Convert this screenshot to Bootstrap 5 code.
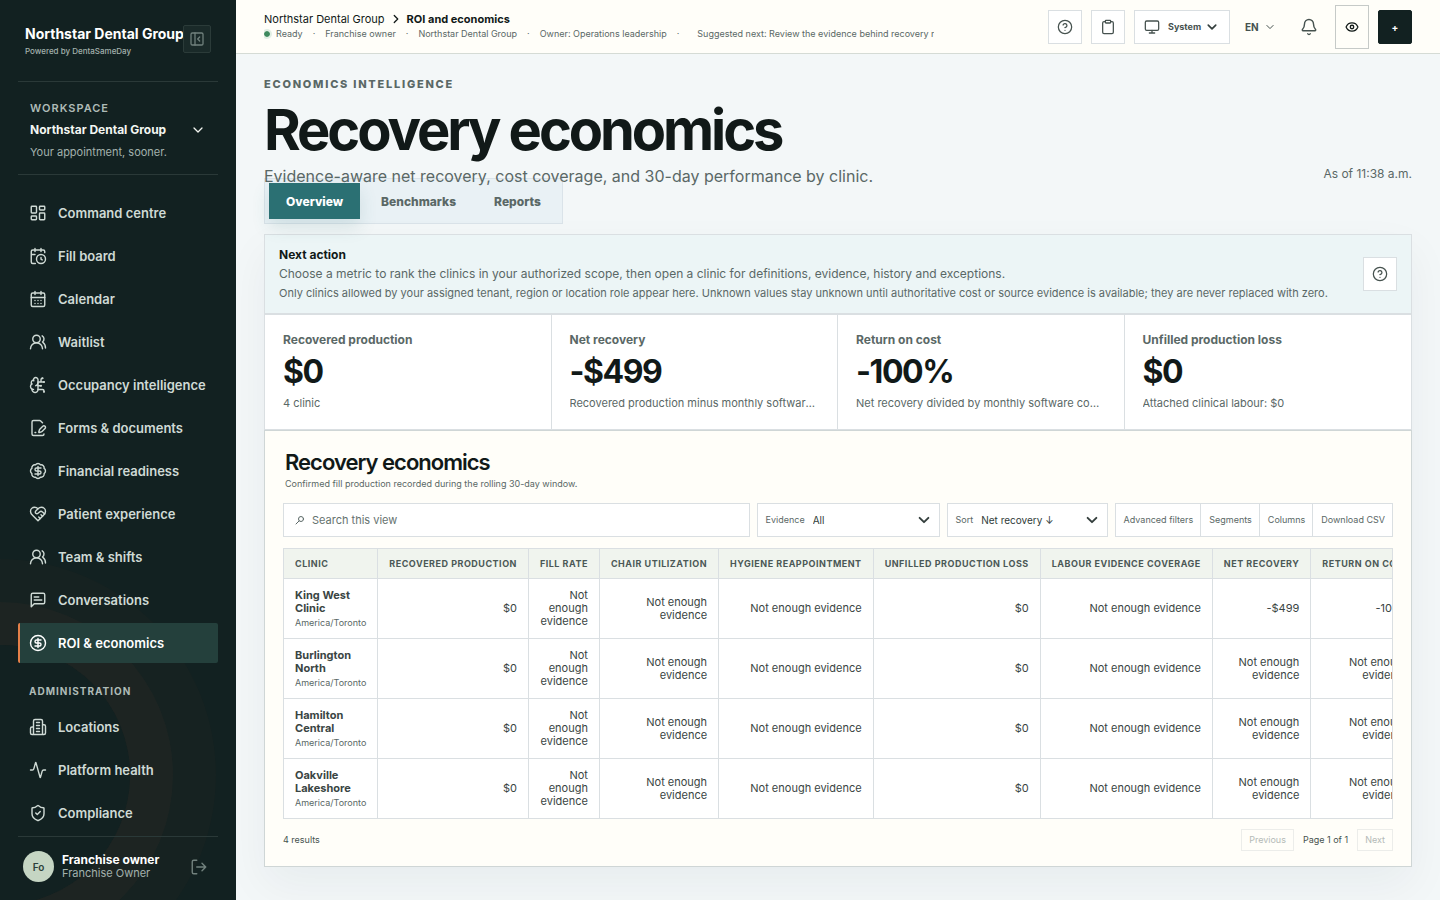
<!DOCTYPE html>
<html lang="en">
<head>
<meta charset="utf-8">
<meta name="viewport" content="width=device-width, initial-scale=1">
<title>ROI and economics</title>
<link href="https://cdn.jsdelivr.net/npm/bootstrap@5.3.0/dist/css/bootstrap.min.css" rel="stylesheet">
<style>
:root { --ink:#111918; --muted:#5a6866; --line:#dadfe2; --side:#122121; --cream:#fffef9; }
body { font-family: Inter, "Liberation Sans", sans-serif; font-size: 11px; line-height: 16px; color: var(--ink); background: #f3f7f8; }
.ico { width: 18px; height: 18px; flex: none; fill: none; stroke: currentColor; stroke-width: 1.9; stroke-linecap: round; stroke-linejoin: round; }
.ico-sm { width: 16px; height: 16px; }
.ico-xs { width: 14px; height: 14px; stroke-width: 2.2; }
.ico-thin { stroke-width: 1; }
h1, h2, p { margin: 0; }
button, select, input { font-family: inherit; }

/* Sidebar */
.side { width: 236px; height: 100vh; top: 0; z-index: 2; background: var(--side); color: #cfdad5; overflow: hidden; padding: 0 18px; }
.side::before { content: ""; position: absolute; left: -130px; bottom: -5px; width: 260px; height: 260px; border-radius: 50%; box-shadow: 0 0 0 43px rgba(232,116,76,.035), 0 0 0 86px rgba(232,116,76,.02); }
.side > * { position: relative; }
.side-rule { border-color: #2a3938 !important; }
.brand { height: 82px; padding: 26px 7px 0; }
.brand-name { font-size: 14px; font-weight: 700; color: #fff; white-space: nowrap; }
.brand-sub { font-size: 8px; line-height: 12px; margin-top: 3px; color: #a3b1ad; font-weight: 500; }
.collapse-btn { position: absolute; right: 7px; top: 25px; width: 28px; height: 28px; border: 1px solid #2b3b39; border-radius: 2px; background: #1a2a29; color: #71817d; }
.workspace { height: 93px; padding: 18px 12px 0; background: none; border: 0; color: inherit; }
.ws-label { font-size: 11px; font-weight: 600; letter-spacing: 1px; color: #aebbb7; }
.ws-name { font-size: 12px; font-weight: 700; color: #f3f6f1; margin-top: 6px; }
.ws-note { font-size: 11px; color: #a3b1ad; margin-top: 6px; }
.menu-area { min-height: 0; padding-top: 18px; }
.menu { display: grid; gap: 3px; }
.menu a { height: 40px; padding: 0 10px 0 9px; border-left: 2px solid transparent; border-radius: 2px; gap: 11px; display: flex; align-items: center; font-size: 13px; font-weight: 600; color: #cfdad5; text-decoration: none; white-space: nowrap; }
.menu a.active { background: #24403c; border-left-color: #e58049; color: #fff; }
.admin-label { font-size: 10px; font-weight: 700; letter-spacing: 1px; color: #aebbb7; padding: 20px 11px 8px; }
.avatar { width: 31px; height: 31px; border-radius: 50%; background: #c5d5c3; color: #2c3f3a; font-size: 10px; font-weight: 600; }
.profile { height: 64px; padding: 0 10px 4px 5px; }
.profile strong { display: block; font-size: 12px; line-height: 14px; color: #fff; }
.profile span { display: block; font-size: 11px; line-height: 13px; color: #a3b1ad; }
.profile a { color: #71817d; }

/* Top bar */
.topbar { height: 54px; background: var(--cream); border-bottom: 1px solid #d5dbd5; padding: 0 28px; }
.crumbs { width: 670px; min-width: 0; }
.crumbs-path { font-size: 11px; line-height: 14px; }
.crumbs-path a { color: var(--ink); text-decoration: none; }
.crumbs-meta { font-size: 9px; line-height: 15px; color: var(--muted); white-space: nowrap; overflow: hidden; }
.sep { padding: 0 10px; }
.dot { width: 6px; height: 6px; border-radius: 50%; background: #3f8a5f; outline: 2px solid #e2efe4; margin-right: 6px; flex: none; }
.tools { gap: 9px; }
.sq { width: 34px; height: 34px; padding: 0; border: 1px solid var(--line); border-radius: 0; background: #fff; color: #46524f; }
.sq.eye { height: 44px; border-color: #c6cac8; color: var(--ink); background: var(--cream); }
.sq.plus { background: var(--side); border-color: var(--side); color: #fff; border-radius: 2px; font-size: 10px; line-height: 16px; font-weight: 700; }
.sq.bare { background: none; border-color: transparent; }
.pick { appearance: none; border: 0; background: transparent right center / 14px 14px no-repeat; color: #46524f; outline-offset: 2px; background-image: url("data:image/svg+xml,%3Csvg xmlns='http://www.w3.org/2000/svg' viewBox='0 0 16 16'%3E%3Cpath fill='none' stroke='%23343f3d' stroke-width='2.2' stroke-linecap='round' stroke-linejoin='round' d='m3 5.5 5 5 5-5'/%3E%3C/svg%3E"); }
.theme { width: 96px; height: 34px; border: 1px solid var(--line); background: #fff; padding: 0 11px 0 9px; color: #46524f; }
.theme .pick { font-size: 9px; font-weight: 700; width: 50px; padding: 0; background-size: 12px 12px; }
.lang { width: 44px; padding: 0 6px; }
.lang .pick { font-size: 10px; font-weight: 700; width: 30px; padding: 0; background-size: 10px 10px; background-image: url("data:image/svg+xml,%3Csvg xmlns='http://www.w3.org/2000/svg' viewBox='0 0 16 16'%3E%3Cpath fill='none' stroke='%2346524f' stroke-width='1.6' stroke-linecap='round' stroke-linejoin='round' d='m3 5.5 5 5 5-5'/%3E%3C/svg%3E"); }

/* Page head */
.page { padding: 22px 28px 33px; }
.eyebrow { font-size: 11px; font-weight: 800; letter-spacing: 0.16em; color: var(--muted); }
.page h1 { font-size: 56px; line-height: 56px; font-weight: 700; letter-spacing: -0.055em; margin-top: 10px; }
.sub-title { font-size: 16px; line-height: 24px; margin-top: 6px; color: var(--muted); }
.as-of { font-size: 12px; color: var(--muted); margin-bottom: 6px; }
.tabs { margin-top: -10px; width: max-content; max-width: 100%; padding: 4px; gap: 4px; border: 1px solid rgba(195,208,216,.4); background: rgba(224,237,242,.55); }
.tabs button { height: 36px; padding: 1px 17px 0; border: 0; background: none; font-size: 12px; font-weight: 800; color: var(--muted); }
.tabs button.active { background: #2b7073; color: #fff; box-shadow: 0 8px 18px rgba(43,112,115,.14); }

/* Stacked blocks */
.stack { box-shadow: 0 18px 42px rgba(24,48,58,.05); margin-top: 10px; }
.next { background: #ecf5f6; border: 1px solid var(--line); padding: 11px 14px; color: var(--muted); }
.next strong { display: block; font-size: 12px; line-height: 18px; color: var(--ink); }
.next-lead { font-size: 12px; line-height: 20px; }
.next-note { font-size: 11px; line-height: 18px; }
.kpis { background: #fff; border: 1px solid var(--line); }
.kpi { padding: 17px 22px 18px 18px; color: var(--muted); border-right: 1px solid var(--line); }
.kpi:last-child { border-right: 0; }
.kpi-label { font-size: 12px; font-weight: 700; }
.kpi-value { font-size: 32px; line-height: 36px; font-weight: 700; letter-spacing: -0.045em; color: var(--ink); margin: 6px 0 5px; }
.panel { background: var(--cream); border: 1px solid #cfd6d6; padding: 17px 18px 15px; }
.panel h2 { font-size: 22px; line-height: 28px; font-weight: 600; letter-spacing: -0.045em; padding-left: 2px; }
.panel-sub { font-size: 9px; line-height: 14px; margin-top: 1px; color: var(--muted); padding-left: 2px; }
.toolbar { gap: 7px; margin: 12px 0 11px; }
.box { height: 34px; background: #fff; border: 1px solid var(--line); color: var(--muted); }
.search input { border: 0; background: none; outline: 0; font-size: 11px; padding: 0; min-width: 0; }
.search input::placeholder { color: #66726f; opacity: 1; }
.field label { font-size: 9px; }
.field .pick { font-size: 10px; color: #303b39; min-width: 0; padding: 0; }
.evidence { width: 183px; } .sort { width: 161px; }
.actions button { font-size: 9px; border: 0; background: none; color: var(--muted); padding: 0 7px 0 8px; }
.actions button + button { border-left: 1px solid var(--line); }
.grid-wrap { overflow: hidden; border: 1px solid var(--line); background: #fff; }
.grid { width: 100%; margin: 0; border-collapse: separate; border-spacing: 0; }
.grid th, .grid td { border-right: 1px solid var(--line); border-bottom: 1px solid var(--line); padding: 0 11px; text-align: right; color: #3a4543; }
.grid tr > :last-child { border-right: 0; }
.grid thead th { height: 30px; background: #f0f4ee; font-size: 9px; font-weight: 700; letter-spacing: 0.056em; white-space: nowrap; color: #4b5856; text-transform: uppercase; }
.grid tbody td, .grid tbody th { height: 60px; font-size: 11px; line-height: 13px; }
.grid tbody th { padding-top: 2px; }
.grid tbody tr:last-child > * { border-bottom: 0; height: 59px; }
.grid tr > :first-child { text-align: left; }
.grid tbody th span { display: block; font-size: 9px; line-height: 15px; font-weight: 400; color: var(--muted); }
.foot { font-size: 9px; color: #46524f; margin-top: 10px; gap: 9px; }
.foot button { height: 22px; font-size: 9px; border: 1px solid #ecedea; background: none; color: #b4bab7; padding: 0 7px; }
</style>
</head>
<body>
<div class="d-flex align-items-start">
  <aside class="side d-flex flex-column position-sticky flex-shrink-0">
    <div class="brand border-bottom side-rule">
      <div class="brand-name">Northstar Dental Group</div>
      <div class="brand-sub">Powered by DentaSameDay</div>
      <button class="collapse-btn d-flex align-items-center justify-content-center p-0" type="button" aria-label="Collapse sidebar"><svg class="ico ico-sm" viewBox="0 0 24 24"><rect width="18" height="18" x="3" y="3" rx="2"/><path d="M9 3v18M16 15l-3-3 3-3"/></svg></button>
    </div>
    <button class="workspace d-flex flex-column align-items-stretch justify-content-start text-start border-bottom side-rule" type="button">
      <span class="ws-label">WORKSPACE</span>
      <span class="ws-name d-flex justify-content-between align-items-center">Northstar Dental Group <svg class="ico ico-sm" viewBox="0 0 24 24"><path d="m6 9 6 6 6-6"/></svg></span>
      <span class="ws-note">Your appointment, sooner.</span>
    </button>
    <div class="menu-area flex-grow-1 overflow-hidden">
      <nav class="menu" aria-label="Main">
        <a href="#"><svg class="ico" viewBox="0 0 24 24"><rect width="7" height="9" x="3" y="3" rx="1"/><rect width="7" height="5" x="14" y="3" rx="1"/><rect width="7" height="9" x="14" y="12" rx="1"/><rect width="7" height="5" x="3" y="16" rx="1"/></svg>Command centre</a>
        <a href="#"><svg class="ico" viewBox="0 0 24 24"><path d="M16 14v2.2l1.6 1M16 2v4M21 7.5V6a2 2 0 0 0-2-2H5a2 2 0 0 0-2 2v14a2 2 0 0 0 2 2h3.5M3 10h5M8 2v4"/><circle cx="16" cy="16" r="6"/></svg>Fill board</a>
        <a href="#"><svg class="ico" viewBox="0 0 24 24"><path d="M8 2v4M16 2v4M3 10h18M8 14h.01M12 14h.01M16 14h.01M8 18h.01M12 18h.01M16 18h.01"/><rect width="18" height="18" x="3" y="4" rx="2"/></svg>Calendar</a>
        <a href="#"><svg class="ico" viewBox="0 0 24 24"><path d="M18 21a8 8 0 0 0-16 0M22 20c0-3.37-2-6.5-4-8a5 5 0 0 0-.45-8.3"/><circle cx="10" cy="8" r="5"/></svg>Waitlist</a>
        <a href="#"><svg class="ico" viewBox="0 0 24 24"><path d="M12 5a3 3 0 1 0-5.997.125 4 4 0 0 0-2.526 5.77 4 4 0 0 0 .556 6.588A4 4 0 1 0 12 18Z"/><path d="M9 13a4.5 4.5 0 0 0 3-4M6.003 5.125A3 3 0 0 0 6.401 6.5M3.477 10.896a4 4 0 0 1 .585-.396M6 18a4 4 0 0 1-1.967-.516M12 13h4M12 18h6a2 2 0 0 1 2 2v1M12 8h8M16 8V5a2 2 0 0 1 2-2"/><circle cx="16" cy="13" r=".5"/><circle cx="18" cy="3" r=".5"/><circle cx="20" cy="21" r=".5"/><circle cx="20" cy="8" r=".5"/></svg>Occupancy intelligence</a>
        <a href="#"><svg class="ico" viewBox="0 0 24 24"><path d="m18 5-2.414-2.414A2 2 0 0 0 14.172 2H6a2 2 0 0 0-2 2v16a2 2 0 0 0 2 2h12a2 2 0 0 0 2-2"/><path d="M21.378 12.626a1 1 0 0 0-3.004-3.004l-4.01 4.012a2 2 0 0 0-.506.854l-.837 2.87a.5.5 0 0 0 .62.62l2.87-.837a2 2 0 0 0 .854-.506zM8 18h1"/></svg>Forms &amp; documents</a>
        <a href="#"><svg class="ico" viewBox="0 0 24 24"><path d="M3.85 8.62a4 4 0 0 1 4.78-4.77 4 4 0 0 1 6.74 0 4 4 0 0 1 4.78 4.78 4 4 0 0 1 0 6.74 4 4 0 0 1-4.77 4.78 4 4 0 0 1-6.75 0 4 4 0 0 1-4.78-4.77 4 4 0 0 1 0-6.76Z"/><path d="M16 8h-6a2 2 0 1 0 0 4h4a2 2 0 1 1 0 4H8M12 18V6"/></svg>Financial readiness</a>
        <a href="#"><svg class="ico" viewBox="0 0 24 24"><path d="M19 14c1.49-1.46 3-3.21 3-5.5A5.5 5.5 0 0 0 16.5 3c-1.76 0-3 .5-4.5 2-1.5-1.5-2.74-2-4.5-2A5.5 5.5 0 0 0 2 8.5c0 2.3 1.5 4.05 3 5.5l7 7Z"/><path d="M12 5 9.04 7.96a2.17 2.17 0 0 0 0 3.08c.82.82 2.13.85 3 .07l2.07-1.9a2.82 2.82 0 0 1 3.79 0l2.96 2.66M18 15l-2-2M15 18l-2-2"/></svg>Patient experience</a>
        <a href="#"><svg class="ico" viewBox="0 0 24 24"><path d="M18 21a8 8 0 0 0-16 0M22 20c0-3.37-2-6.5-4-8a5 5 0 0 0-.45-8.3"/><circle cx="10" cy="8" r="5"/></svg>Team &amp; shifts</a>
        <a href="#"><svg class="ico" viewBox="0 0 24 24"><path d="M21 15a2 2 0 0 1-2 2H7l-4 4V5a2 2 0 0 1 2-2h14a2 2 0 0 1 2 2zM13 8H7M17 12H7"/></svg>Conversations</a>
        <a href="#" class="active" aria-current="page"><svg class="ico" viewBox="0 0 24 24"><circle cx="12" cy="12" r="10"/><path d="M16 8h-6a2 2 0 1 0 0 4h4a2 2 0 1 1 0 4H8M12 18V6"/></svg>ROI &amp; economics</a>
      </nav>
      <div class="admin-label">ADMINISTRATION</div>
      <nav class="menu" aria-label="Administration">
        <a href="#"><svg class="ico" viewBox="0 0 24 24"><path d="M6 22V4a2 2 0 0 1 2-2h8a2 2 0 0 1 2 2v18ZM6 12H4a2 2 0 0 0-2 2v6a2 2 0 0 0 2 2h2M18 9h2a2 2 0 0 1 2 2v9a2 2 0 0 1-2 2h-2M10 6h4M10 10h4M10 14h4M10 18h4"/></svg>Locations</a>
        <a href="#"><svg class="ico" viewBox="0 0 24 24"><path d="M22 12h-2.48a2 2 0 0 0-1.93 1.46l-2.35 8.36a.25.25 0 0 1-.48 0L9.24 2.18a.25.25 0 0 0-.48 0l-2.35 8.36A2 2 0 0 1 4.49 12H2"/></svg>Platform health</a>
        <a href="#"><svg class="ico" viewBox="0 0 24 24"><path d="M20 13c0 5-3.5 7.5-7.66 8.95a1 1 0 0 1-.67-.01C7.5 20.5 4 18 4 13V6a1 1 0 0 1 1-1c2 0 4.5-1.2 6.24-2.72a1.17 1.17 0 0 1 1.52 0C14.51 3.81 17 5 19 5a1 1 0 0 1 1 1zM9 12l2 2 4-4"/></svg>Compliance</a>
      </nav>
    </div>
    <div class="profile border-top side-rule d-flex align-items-center">
      <div class="avatar d-flex align-items-center justify-content-center">Fo</div>
      <div class="ms-2 flex-grow-1"><strong>Franchise owner</strong><span>Franchise Owner</span></div>
      <a href="#" aria-label="Sign out"><svg class="ico d-block" viewBox="0 0 24 24"><path d="m16 17 5-5-5-5M21 12H9M9 21H5a2 2 0 0 1-2-2V5a2 2 0 0 1 2-2h4"/></svg></a>
    </div>
  </aside>

  <div class="flex-grow-1 overflow-hidden">
    <header class="topbar d-flex align-items-center justify-content-between">
      <div class="crumbs">
        <div class="crumbs-path d-flex align-items-center"><a href="#">Northstar Dental Group</a><svg class="ico ico-xs mx-1" viewBox="0 0 24 24"><path d="m9 18 6-6-6-6"/></svg><strong>ROI and economics</strong></div>
        <div class="crumbs-meta d-flex align-items-center"><span class="dot"></span><span>Ready</span><span class="sep">·</span><span>Franchise owner</span><span class="sep">·</span><span>Northstar Dental Group</span><span class="sep">·</span><span>Owner: Operations leadership</span><span class="sep">·</span><span class="ps-2">Suggested next: Review the evidence behind recovery results</span></div>
      </div>
      <div class="tools d-flex align-items-center">
        <button class="sq d-flex align-items-center justify-content-center" type="button" aria-label="Help"><svg class="ico ico-sm" viewBox="0 0 24 24"><circle cx="12" cy="12" r="10"/><path d="M9.09 9a3 3 0 0 1 5.83 1c0 2-3 3-3 3M12 17h.01"/></svg></button>
        <button class="sq d-flex align-items-center justify-content-center" type="button" aria-label="Tasks"><svg class="ico ico-sm" viewBox="0 0 24 24"><rect width="8" height="4" x="8" y="2" rx="1"/><path d="M16 4h2a2 2 0 0 1 2 2v14a2 2 0 0 1-2 2H6a2 2 0 0 1-2-2V6a2 2 0 0 1 2-2h2"/></svg></button>
        <div class="theme d-flex align-items-center justify-content-between"><svg class="ico ico-sm" viewBox="0 0 24 24"><rect width="20" height="14" x="2" y="3" rx="2"/><path d="M8 21h8M12 17v4"/></svg><select class="pick" aria-label="Theme"><option>System</option><option>Light</option><option>Dark</option></select></div>
        <div class="lang"><select class="pick" aria-label="Language"><option>EN</option><option>FR</option></select></div>
        <button class="sq bare d-flex align-items-center justify-content-center" type="button" aria-label="Notifications"><svg class="ico" viewBox="0 0 24 24"><path d="M10.268 21a2 2 0 0 0 3.464 0M3.262 15.326A1 1 0 0 0 4 17h16a1 1 0 0 0 .74-1.673C19.41 13.956 18 12.499 18 8A6 6 0 0 0 6 8c0 4.499-1.411 5.956-2.738 7.326"/></svg></button>
        <button class="sq eye d-flex align-items-center justify-content-center" type="button" aria-label="View options"><svg class="ico ico-xs" viewBox="0 0 24 24"><path d="M2.062 12.348a1 1 0 0 1 0-.696 10.75 10.75 0 0 1 19.876 0 1 1 0 0 1 0 .696 10.75 10.75 0 0 1-19.876 0"/><circle cx="12" cy="12" r="3"/></svg></button>
        <button class="sq plus" type="button" aria-label="Create">+</button>
      </div>
    </header>

    <main class="page">
      <div class="d-flex justify-content-between align-items-end">
        <div>
          <div class="eyebrow">ECONOMICS INTELLIGENCE</div>
          <h1>Recovery economics</h1>
          <p class="sub-title">Evidence-aware net recovery, cost coverage, and 30-day performance by clinic.</p>
        </div>
        <div class="as-of text-nowrap">As of 11:38 a.m.</div>
      </div>
      <div class="tabs d-flex" role="tablist">
        <button class="active" type="button" role="tab" aria-selected="true">Overview</button>
        <button type="button" role="tab">Benchmarks</button>
        <button type="button" role="tab">Reports</button>
      </div>

      <div class="stack">
        <section class="next d-flex align-items-center justify-content-between gap-3">
          <div>
            <strong>Next action</strong>
            <p class="next-lead">Choose a metric to rank the clinics in your authorized scope, then open a clinic for definitions, evidence, history and exceptions.</p>
            <p class="next-note">Only clinics allowed by your assigned tenant, region or location role appear here. Unknown values stay unknown until authoritative cost or source evidence is available; they are never replaced with zero.</p>
          </div>
          <button class="sq d-flex align-items-center justify-content-center flex-shrink-0" type="button" aria-label="Help with this page"><svg class="ico ico-sm" viewBox="0 0 24 24"><circle cx="12" cy="12" r="10"/><path d="M9.09 9a3 3 0 0 1 5.83 1c0 2-3 3-3 3M12 17h.01"/></svg></button>
        </section>

        <section class="kpis row g-0">
          <div class="kpi col-3"><div class="kpi-label">Recovered production</div><div class="kpi-value">$0</div><div class="text-truncate">4 clinic</div></div>
          <div class="kpi col-3"><div class="kpi-label">Net recovery</div><div class="kpi-value">-$499</div><div class="text-truncate">Recovered production minus monthly software cost</div></div>
          <div class="kpi col-3"><div class="kpi-label">Return on cost</div><div class="kpi-value">-100%</div><div class="text-truncate">Net recovery divided by monthly software cost per clinic</div></div>
          <div class="kpi col-3"><div class="kpi-label">Unfilled production loss</div><div class="kpi-value">$0</div><div class="text-truncate">Attached clinical labour: $0</div></div>
        </section>

        <section class="panel">
          <h2>Recovery economics</h2>
          <p class="panel-sub">Confirmed fill production recorded during the rolling 30-day window.</p>
          <div class="toolbar d-flex">
            <label class="box search d-flex align-items-center flex-grow-1 px-2"><svg class="ico ico-sm ico-thin me-1" viewBox="0 0 16 16"><circle cx="9" cy="7" r="2.5"/><path d="m7 9-3 3"/></svg><input class="w-100" type="text" placeholder="Search this view" aria-label="Search this view"></label>
            <div class="box field evidence d-flex align-items-center px-2"><label for="ev">Evidence</label><select id="ev" class="pick flex-grow-1 ms-2"><option>All</option></select></div>
            <div class="box field sort d-flex align-items-center px-2"><label for="so">Sort</label><select id="so" class="pick flex-grow-1 ms-2"><option>Net recovery ↓</option></select></div>
            <div class="box actions d-flex"><button type="button">Advanced filters</button><button type="button">Segments</button><button type="button">Columns</button><button type="button">Download CSV</button></div>
          </div>
          <div class="grid-wrap">
            <table class="grid">
              <thead><tr><th>Clinic</th><th>Recovered production</th><th>Fill rate</th><th>Chair utilization</th><th>Hygiene reappointment</th><th>Unfilled production loss</th><th>Labour evidence coverage</th><th>Net recovery</th><th>Return on cost</th></tr></thead>
              <tbody>
                <tr><th>King West Clinic<span>America/Toronto</span></th><td>$0</td><td>Not enough evidence</td><td>Not enough evidence</td><td>Not enough evidence</td><td>$0</td><td>Not enough evidence</td><td>-$499</td><td>-100%</td></tr>
                <tr><th>Burlington North<span>America/Toronto</span></th><td>$0</td><td>Not enough evidence</td><td>Not enough evidence</td><td>Not enough evidence</td><td>$0</td><td>Not enough evidence</td><td>Not enough evidence</td><td>Not enough evidence</td></tr>
                <tr><th>Hamilton Central<span>America/Toronto</span></th><td>$0</td><td>Not enough evidence</td><td>Not enough evidence</td><td>Not enough evidence</td><td>$0</td><td>Not enough evidence</td><td>Not enough evidence</td><td>Not enough evidence</td></tr>
                <tr><th>Oakville Lakeshore<span>America/Toronto</span></th><td>$0</td><td>Not enough evidence</td><td>Not enough evidence</td><td>Not enough evidence</td><td>$0</td><td>Not enough evidence</td><td>Not enough evidence</td><td>Not enough evidence</td></tr>
              </tbody>
            </table>
          </div>
          <div class="foot d-flex align-items-center"><span class="me-auto">4 results</span><button type="button" disabled>Previous</button><span>Page 1 of 1</span><button type="button" disabled>Next</button></div>
        </section>
      </div>
    </main>
  </div>
</div>
<script src="https://cdn.jsdelivr.net/npm/bootstrap@5.3.0/dist/js/bootstrap.bundle.min.js"></script>
</body>
</html>
